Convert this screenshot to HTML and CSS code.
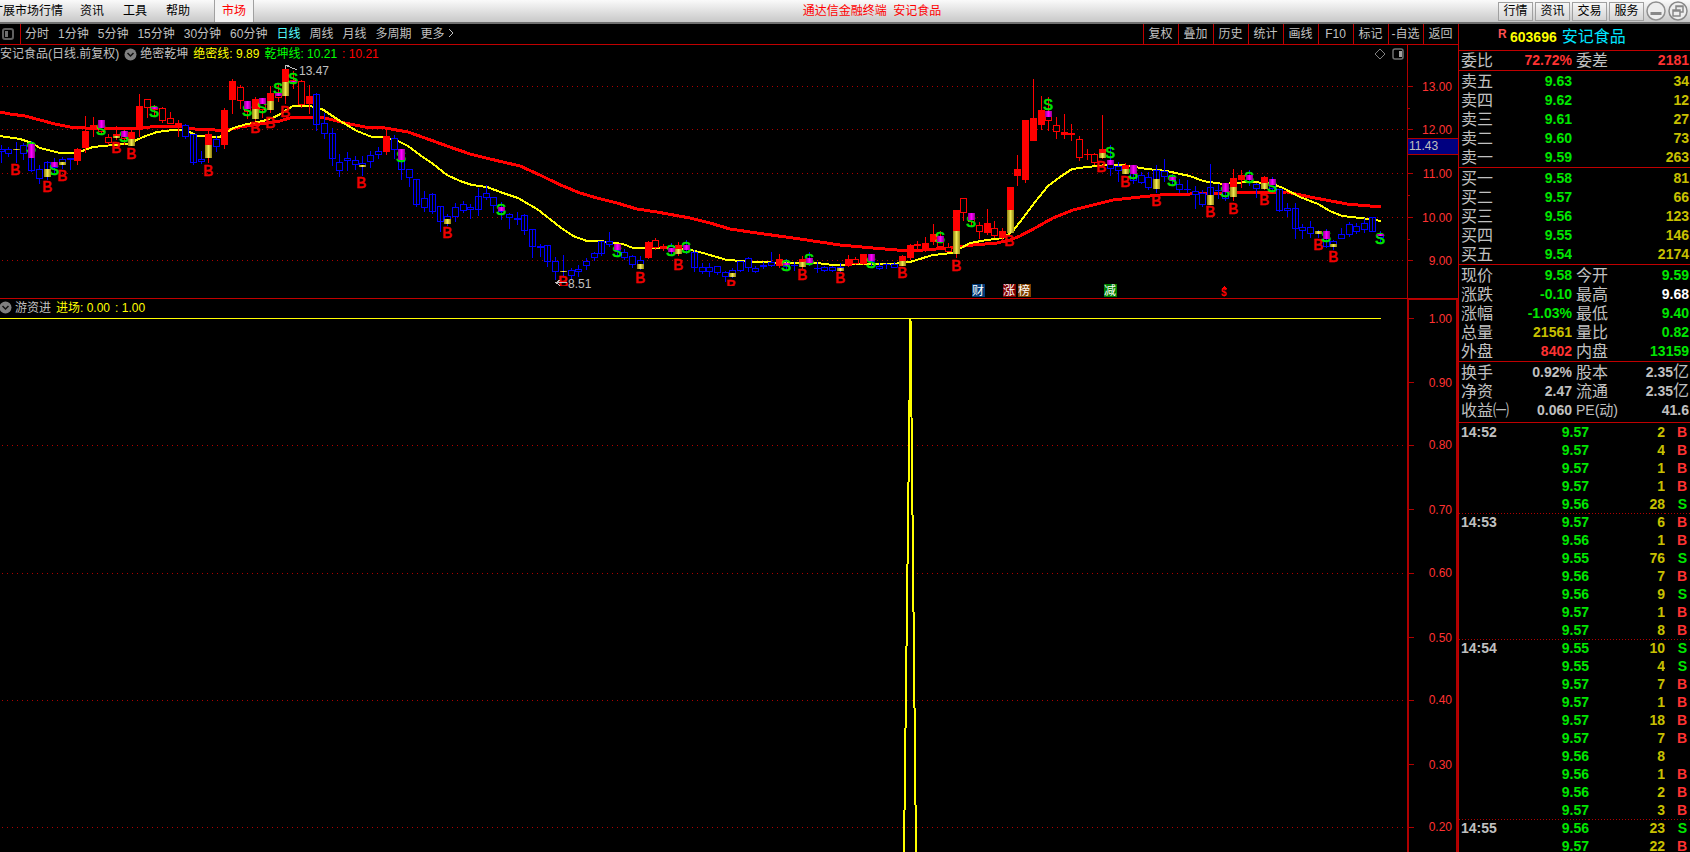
FILE: index.html
```html
<!DOCTYPE html>
<html lang="zh-CN">
<head>
<meta charset="utf-8">
<title>通达信金融终端 安记食品</title>
<link rel="stylesheet" href="styles.css">
</head>
<body>
<header class="titlebar">
  <nav class="menu">
    <button>扩展市场行情</button><button>资讯</button><button>工具</button><button>帮助</button>
  </nav>
  <button class="market-tab">市场</button>
  <h1 class="app-title">通达信金融终端&nbsp; 安记食品</h1>
  <div class="window-tools">
    <button class="tool">行情</button><button class="tool">资讯</button><button class="tool">交易</button><button class="tool">服务</button>
    <button class="round" aria-label="最小化"><svg width="20" height="20" viewBox="0 0 20 20"><circle cx="10" cy="10" r="9" fill="#eee" stroke="#909090" stroke-width="1.5"/><rect x="4.500" y="11" width="11" height="3" fill="#888"/></svg></button>
    <button class="round" aria-label="还原"><svg width="20" height="20" viewBox="0 0 20 20" fill="#eee" stroke="#888" stroke-width="1.5"><circle cx="10" cy="10" r="9"/><path d="M8 5H15V11H8Z M8 5.500H15"/><path d="M5 9H12V15H5Z M5 10H12"/></svg></button>
  </div>
</header>
<main class="workspace">
  <section class="charts">
    <nav class="periods">
      <button class="layout-toggle" aria-label="侧栏"><svg width="12" height="12" viewBox="0 0 12 12"><rect x="1" y="1" width="10" height="10" rx="2" fill="none" stroke="#606060" stroke-width="2"/><rect x="3" y="3" width="3" height="6" fill="#707070"/></svg></button>
      <div class="period-list">
        <button>分时</button><button>1分钟</button><button>5分钟</button><button>15分钟</button><button>30分钟</button><button>60分钟</button><button class="active">日线</button><button>周线</button><button>月线</button><button>多周期</button><button>更多 <svg width="7" height="10" viewBox="0 0 7 10"><path d="M1 1L5 5L1 9" fill="none" stroke="#c0c0c0"/></svg></button>
      </div>
      <div class="chart-tools">
        <button>复权</button><button>叠加</button><button>历史</button><button>统计</button><button>画线</button><button>F10</button><button>标记</button><button>-自选</button><button>返回</button>
      </div>
    </nav>
    <div class="legend">
      <div class="legend-items">
        <span>安记食品(日线.前复权)</span>
        <svg class="drop" width="13" height="13" viewBox="0 0 13 13"><circle cx="6.500" cy="6.500" r="6" fill="#808080"/><path d="M3.500 5L6.500 8L9.500 5" fill="none" stroke="#111" stroke-width="1.500"/></svg>
        <span>绝密乾坤</span><span class="yellow">绝密线: 9.89</span><span class="green">乾坤线: 10.21</span><span class="crimson">: 10.21</span>
      </div>
      <div class="legend-icons">
        <svg width="12" height="12" viewBox="0 0 12 12"><path d="M6 1L11 6L6 11L1 6Z" fill="none" stroke="#808080"/></svg>
        <svg width="12" height="12" viewBox="0 0 12 12"><rect x="1" y="1" width="10" height="10" rx="2" fill="none" stroke="#707070" stroke-width="1.500"/><rect x="7" y="3" width="3" height="6" fill="#a0a0a0"/></svg>
      </div>
      <div class="axis-cap"></div>
    </div>
    <svg class="plot" id="price" viewBox="0 63 1458 235" role="img" aria-label="日线">
      <defs>
        <linearGradient id="gold"><stop offset="0" stop-color="#908010"/><stop offset=".5" stop-color="#f0e850"/><stop offset="1" stop-color="#908010"/></linearGradient>
        <linearGradient id="pink"><stop offset="0" stop-color="#900090"/><stop offset=".5" stop-color="#ff00ff"/><stop offset="1" stop-color="#900090"/></linearGradient>
        <clipPath id="plot-area"><rect x="0" y="63" width="1407" height="223"/></clipPath>
      </defs>
      <g class="grid"><path d="M2 86.500H1404M2 129.500H1404M2 173.500H1404M2 217.500H1404M2 260.500H1404"/></g>
      <polyline class="slow" points="0,112 10,114 25,116 40,120 55,124 70,127 85,128 105,128 130,129 150,127 175,126 195,129 215,130 228,130 240,127 260,124 280,121 290,118 308,117 325,118 345,123 365,127 385,128 408,132 425,138 447,146 470,154 490,159 520,166 540,175 550,180 563,186 580,193 597,198 617,203 637,209 657,212 690,218 710,223 730,229 757,233 800,239 840,245 873,248 897,250 923,250 950,248 973,245 997,243 1010,240 1020,236 1037,227 1053,218 1073,210 1093,205 1113,200 1140,197 1160,195 1190,194 1227,193 1287,192 1310,197 1347,204 1381,207"/>
      <polyline class="fast" points="0,136 20,139 32,143 40,148 60,153 77,153 93,147 113,145 128,144 143,137 157,132 173,130 185,130 198,136 220,137 233,128 247,124 263,121 277,116 293,106 310,106 322,109 340,121 357,131 372,137 383,137 398,141 408,146 420,155 433,164 447,175 460,181 472,185 487,187 503,193 518,198 537,209 560,227 573,236 587,241 600,241 623,244 633,248 653,248 687,249 703,253 727,260 757,262 787,263 817,263 833,265 860,264 893,264 910,262 923,258 933,255 952,253 970,243 987,240 1003,238 1013,231 1023,218 1035,202 1048,186 1060,177 1072,169 1087,167 1107,165 1123,165 1147,169 1167,171 1180,174 1190,176 1203,181 1223,184 1247,182 1270,183 1283,188 1300,197 1318,204 1330,211 1342,216 1360,218 1370,219 1381,221"/>
      <g id="candles"></g>
      <g id="letters" class="letters" clip-path="url(#plot-area)"></g>
      <g id="bars"></g>
      <g class="note">
        <path d="M285 69V65H289M285 65L297 70"/><text x="299" y="75">13.47</text>
        <path d="M567 282.500H556M560 280L556 282.500L560 286"/><text x="568" y="288">8.51</text>
      </g>
      <g class="badges">
        <rect x="972" y="284" width="13" height="13" fill="#003a78"/><text x="972" y="295">财</text>
        <rect x="1003" y="284" width="13" height="13" fill="#800000"/><text x="1003" y="295">涨</text>
        <rect x="1018" y="284" width="13" height="13" fill="#804000"/><text x="1018" y="295">榜</text>
        <rect x="1104" y="284" width="13" height="13" fill="#008000"/><text x="1104" y="295">减</text>
        <path d="M1221 289L1224 286L1227 289Z" fill="#f00"/><text class="dollar" x="1221" y="296">$</text>
      </g>
      <g class="axis">
        <path d="M1407.500 63V298M1407 86.500H1413M1407 129.500H1413M1407 173.500H1413M1407 217.500H1413M1407 260.500H1413M1407 108.500H1410M1407 195.500H1410M1407 239.500H1410"/>
        <text x="1452" y="91">13.00</text><text x="1452" y="134">12.00</text><text x="1452" y="178">11.00</text><text x="1452" y="222">10.00</text><text x="1452" y="265">9.00</text>
        <rect x="1407.500" y="138.500" width="52" height="16"/><text class="current" x="1409" y="150">11.43</text>
      </g>
    </svg>
    <div class="legend signal">
      <div class="legend-items">
        <svg class="drop" width="13" height="13" viewBox="0 0 13 13"><circle cx="6.500" cy="6.500" r="6" fill="#808080"/><path d="M3.500 5L6.500 8L9.500 5" fill="none" stroke="#111" stroke-width="1.500"/></svg>
        <span>游资进</span><span class="yellow">进场: 0.00</span><span class="yellow">: 1.00</span>
      </div>
      <div class="axis-cap"></div>
    </div>
    <svg class="plot" viewBox="0 316 1458 536" role="img" aria-label="游资进">
      <g class="grid"><path d="M2 445.500H1404M2 573.500H1404M2 700.500H1404M2 827.500H1404"/></g>
      <path class="line" d="M0 318.500H1381"/>
      <path class="fast" d="M904 853L910.500 319L916 853"/>
      <path class="axis-line" d="M1408 316V853M1457 316V853"/>
      <g class="axis">
        <path d="M1408 318.500H1414M1408 382.500H1414M1408 445.500H1414M1408 509.500H1414M1408 573.500H1414M1408 637.500H1414M1408 700.500H1414M1408 764.500H1414M1408 827.500H1414"/>
        <text x="1452" y="323">1.00</text><text x="1452" y="387">0.90</text><text x="1452" y="449">0.80</text><text x="1452" y="514">0.70</text><text x="1452" y="577">0.60</text><text x="1452" y="642">0.50</text><text x="1452" y="704">0.40</text><text x="1452" y="769">0.30</text><text x="1452" y="831">0.20</text>
      </g>
    </svg>
  </section>
  <aside class="quote">
    <h2 class="stock"><sup>R</sup><b>603696</b><span>安记食品</span></h2>
    <table class="pairs ratio"><colgroup><col class="c1"><col class="c2"><col class="c3"><col></colgroup>
      <tr><th>委比</th><td class="red">72.72%</td><th>委差</th><td class="red">2181</td></tr>
    </table>
    <table class="levels"><colgroup><col class="c1"><col class="c2"><col></colgroup>
      <tr><th>卖五</th><td>9.63</td><td>34</td></tr>
      <tr><th>卖四</th><td>9.62</td><td>12</td></tr>
      <tr><th>卖三</th><td>9.61</td><td>27</td></tr>
      <tr><th>卖二</th><td>9.60</td><td>73</td></tr>
      <tr><th>卖一</th><td>9.59</td><td>263</td></tr>
    </table>
    <table class="levels"><colgroup><col class="c1"><col class="c2"><col></colgroup>
      <tr><th>买一</th><td>9.58</td><td>81</td></tr>
      <tr><th>买二</th><td>9.57</td><td>66</td></tr>
      <tr><th>买三</th><td>9.56</td><td>123</td></tr>
      <tr><th>买四</th><td>9.55</td><td>146</td></tr>
      <tr><th>买五</th><td>9.54</td><td>2174</td></tr>
    </table>
    <table class="pairs"><colgroup><col class="c1"><col class="c2"><col class="c3"><col></colgroup>
      <tr><th>现价</th><td class="up">9.58</td><th>今开</th><td class="up">9.59</td></tr>
      <tr><th>涨跌</th><td class="up">-0.10</td><th>最高</th><td class="white">9.68</td></tr>
      <tr><th>涨幅</th><td class="up">-1.03%</td><th>最低</th><td class="up">9.40</td></tr>
      <tr><th>总量</th><td class="gold">21561</td><th>量比</th><td class="up">0.82</td></tr>
      <tr><th>外盘</th><td class="red">8402</td><th>内盘</th><td class="up">13159</td></tr>
    </table>
    <table class="pairs finance"><colgroup><col class="c1"><col class="c2"><col class="c3"><col></colgroup>
      <tr><th>换手</th><td>0.92%</td><th>股本</th><td>2.35<span class="unit">亿</span></td></tr>
      <tr><th>净资</th><td>2.47</td><th>流通</th><td>2.35<span class="unit">亿</span></td></tr>
      <tr><th>收益㈠</th><td>0.060</td><th class="small">PE(动)</th><td>41.6</td></tr>
    </table>
    <table class="ticks"><colgroup><col class="t1"><col class="t2"><col class="t3"><col></colgroup><tbody id="ticks"></tbody></table>
  </aside>
</main>
<script src="chart.js"></script>
</body>
</html>
```
FILE: styles.css
```css
* { box-sizing: border-box; }
html, body { height: 100%; }
body {
  margin: 0;
  display: flex;
  flex-direction: column;
  overflow: hidden;
  background: #000;
  color: #c0c0c0;
  font: 12px/18px "Liberation Sans", "Noto Sans CJK SC", sans-serif;
}
button {
  margin: 0;
  padding: 0;
  border: 0;
  background: none;
  color: inherit;
  font: inherit;
  white-space: nowrap;
}
svg { flex: none; }

.titlebar {
  display: flex;
  flex: none;
  height: 24px;
  border-bottom: 2px solid #707070;
  background: linear-gradient(#fafafa, #c8c8c8);
  color: #000;
}
.menu {
  display: flex;
  gap: 19px;
  margin-left: -9px;
  padding-right: 24px;
}
.menu button:first-child { margin-right: -2px; }
.market-tab {
  width: 40px;
  border: solid #a0a0a0;
  border-width: 0 1px;
  background: #f4f4f4;
  color: #f00;
}
.app-title {
  flex: 1;
  margin: 0;
  padding-right: 8px;
  color: #f00;
  font-size: 12px;
  font-weight: 400;
  line-height: 22px;
  text-align: center;
}
.window-tools {
  display: flex;
  align-items: center;
  gap: 2px;
  padding-right: 2px;
}
.tool {
  width: 35px;
  height: 19px;
  border: 1px solid #a0a0a0;
  background: linear-gradient(#f6f6f6, #d4d4d4);
  line-height: 16px;
}
.round { width: 20px; height: 20px; }
.round svg { display: block; }

.workspace {
  display: grid;
  flex: 1;
  grid-template-columns: minmax(0, 1fr) 232px;
  min-height: 0;
}
.charts {
  display: flex;
  flex-direction: column;
  min-height: 0;
  overflow: hidden;
}
.periods {
  display: flex;
  flex: none;
  height: 21px;
  border-bottom: 1px solid #c00000;
}
.layout-toggle {
  display: flex;
  align-items: center;
  width: 21px;
  padding-left: 2px;
  border-right: 1px solid #c00000;
}
.period-list {
  display: flex;
  flex: 1;
  gap: 9px;
  padding-left: 4px;
}
.active { color: #54fcfc; }
.chart-tools { display: flex; }
.chart-tools button {
  width: 35px;
  padding-right: 1px;
  border-left: 1px solid #c00000;
}

.legend {
  display: flex;
  flex: none;
  height: 18px;
}
.legend-items {
  display: flex;
  flex: 1;
  align-items: center;
  gap: 5px;
  white-space: nowrap;
}
.legend-items .drop { margin-right: -2px; }
.legend-icons {
  display: flex;
  align-items: center;
  gap: 6px;
  padding-right: 3px;
}
.axis-cap {
  width: 51px;
  border-left: 1px solid #c00000;
}
.signal {
  border-top: 1px solid #c00000;
}
.signal .drop { margin-left: -1px; }
.signal .axis-cap {
  border: solid #b00000;
  border-width: 1px 2px 0;
}
.yellow { color: #ff0; }
.green { color: #0f0; }
.crimson { color: #f00; }

.plot {
  display: block;
  width: 100%;
  height: auto;
  overflow: visible;
  shape-rendering: crispEdges;
}
.grid path {
  fill: none;
  stroke: #b00000;
  stroke-dasharray: 1 4;
}
.slow { fill: none; stroke: #f00; stroke-width: 3; }
.fast { fill: none; stroke: #ff0; stroke-width: 2; }
.line { stroke: #ff0; }
.axis path { fill: none; stroke: #b00000; }
.axis-line { fill: none; stroke: #b00000; stroke-width: 2; }
.axis rect { fill: #000080; stroke: #b00000; }
.axis text { fill: #ff3232; text-anchor: end; }
.axis .current { fill: #c0c0c0; text-anchor: start; }
.note path { fill: none; stroke: #c0c0c0; }
.note text { fill: #c0c0c0; }
.badges text { fill: #fff; }
.badges .dollar { fill: #f00; font-size: 10px; font-weight: 700; }
.letters text {
  font: 17px "Liberation Mono", monospace;
  text-anchor: middle;
}
.letters .buy { fill: #f00000; stroke: #f00000; }
.letters .sell { fill: #00e600; stroke: #00e600; }
.letters .buy, .letters .sell { stroke-width: 0.5; }

.quote {
  min-height: 0;
  overflow: hidden;
  border-left: 1px solid #c00000;
}
.stock {
  display: flex;
  height: 27px;
  margin: 0;
  padding-left: 39px;
  border-bottom: 1px solid #c00000;
  font-size: 16px;
  font-weight: 400;
  line-height: 26px;
}
.stock sup {
  width: 12px;
  color: #ff5050;
  font-size: 12px;
  font-weight: 700;
  line-height: 20px;
  vertical-align: top;
}
.stock b { color: #ff0; font-size: 14px; }
.stock span { padding-left: 5px; color: #00e6ff; }
table {
  width: 100%;
  border-collapse: separate;
  border-spacing: 0;
  table-layout: fixed;
}
.pairs, .levels { padding-top: 1px; border-bottom: 1px solid #c00000; }
.ratio { padding-top: 0; }
.c1 { width: 50px; }
.c2 { width: 63px; }
.c3 { width: 50px; }
th, td {
  height: 19px;
  padding: 0;
  overflow: hidden;
  line-height: 19px;
  white-space: nowrap;
}
th {
  padding-left: 2px;
  font-size: 16px;
  font-weight: 400;
  text-align: left;
}
td {
  font-size: 14px;
  font-weight: 700;
  text-align: right;
}
td + th { padding-left: 4px; }
td:last-child { padding-right: 1px; }
.small { font-size: 14px; }
.unit { font-size: 16px; font-weight: 400; line-height: 1px; }
.levels td { color: #00e600; }
.levels td + td { color: #c8c000; }
.red { color: #ff3232; }
.up { color: #00e600; }
.white { color: #fff; }
.gold { color: #c8c000; }
.finance { padding-bottom: 2px; }

.t1 { width: 60px; }
.t2 { width: 70px; }
.t3 { width: 76px; }
.ticks th, .ticks td { height: 18px; line-height: 18px; }
.ticks th { font-size: 14px; font-weight: 700; }
.ticks td { color: #00e600; }
.ticks .volume { color: #c8c000; }
.ticks td:last-child { padding-right: 3px; }
.ticks .buy { color: #ff3232; }
.ticks .minute th, .ticks .minute td {
  background: repeating-linear-gradient(90deg, #b00000 0 1px, transparent 1px 3px) top / 100% 1px no-repeat;
}
```
FILE: chart.js
```js
// kind, x, high, body top, body bottom, low
// r: solid red, h: hollow red, b: hollow blue
const candles = `
b 1 145 149 152 163;b 8 147 149 154 157;b 16 142 149 150 163;b 23 143 145 154 160;b 31 141 144 171 172;b 39 165 169 179 184
b 47 161 162 177 180;b 54 158 162 168 173;b 62 157 159 165 169;b 70 158 158 160 170;r 77 148 149 161 165;r 85 116 131 148 153
r 93 117 125 127 137;h 101 120 120 132 134;h 108 134 137 143 145;r 116 126 134 137 140;h 124 129 131 139 145;r 131 127 132 146 146
r 139 94 106 130 137;h 147 99 99 108 118;h 154 105 107 110 117;h 162 107 108 121 123;h 170 112 118 124 124;r 178 120 123 128 137
b 185 124 125 137 139;b 193 134 134 163 165;b 201 151 159 162 164;r 208 130 134 158 163;b 216 136 139 147 152;r 224 108 110 145 149
r 232 79 81 100 114;h 240 85 87 101 109;h 247 101 101 112 119;r 255 97 99 119 121;h 262 98 98 110 118;r 270 86 93 110 113
h 278 83 93 98 102;r 285 68 69 96 104;h 293 71 80 83 89;h 301 80 81 105 108;r 309 85 96 104 114;b 316 93 94 125 131
b 324 113 123 134 139;b 332 128 133 159 166;b 339 154 162 171 177;b 347 152 158 161 171;b 355 156 160 165 170;b 362 156 163 167 176
b 370 151 155 162 168;b 378 147 151 155 159;r 386 130 136 152 155;b 394 135 138 150 159;b 401 149 149 170 180;b 409 169 169 178 187
b 416 179 179 205 207;b 424 191 198 208 212;b 432 193 194 212 214;b 440 206 206 222 232;b 447 214 216 224 226;b 455 203 207 217 222
b 463 201 204 211 213;b 470 204 207 210 219;b 478 188 196 210 216;b 486 185 193 198 200;b 493 197 197 206 213;b 501 202 207 212 220
b 509 213 214 218 229;b 517 212 218 220 225;b 524 214 215 231 235;b 532 229 229 247 258;b 540 244 246 248 257;b 547 245 245 262 267
b 555 257 261 272 280;b 563 255 271 272 276;b 571 268 270 276 280;b 578 265 269 272 277;b 586 258 261 266 270;b 594 252 253 258 261
b 601 241 241 254 256;b 609 232 241 245 247;b 617 244 244 251 256;b 624 249 252 258 260;b 632 255 256 265 268;b 640 256 260 269 270
r 648 241 242 258 259;h 655 238 240 248 250;r 663 244 246 249 251;b 671 243 246 252 255;r 678 242 245 254 256;b 686 240 245 250 254
b 694 250 252 268 272;b 702 263 267 272 274;b 709 263 267 272 277;b 717 266 266 273 275;b 725 271 272 277 282;b 732 268 270 277 278
b 740 261 261 271 272;b 748 257 258 268 272;b 755 266 268 272 273;b 763 262 265 267 269;b 771 252 262 266 267;r 779 254 259 266 268
b 786 259 263 267 271;b 794 262 265 266 271;r 802 256 259 267 269;b 809 252 258 263 266;b 817 262 268 269 273;b 824 266 267 271 272
b 832 266 267 271 272;b 840 263 267 271 273;r 848 255 259 266 267;h 855 257 259 264 265;r 863 254 254 264 265;b 871 254 254 262 266
b 879 263 266 269 270;b 886 263 264 265 269;b 894 262 264 268 268;r 902 255 256 266 266;r 910 244 245 258 260;r 917 241 244 246 249
r 925 237 243 251 252;r 933 224 234 242 245;h 940 231 236 247 247;h 948 243 247 252 252;r 956 210 210 254 258;h 963 198 198 213 221
h 971 213 213 222 226;h 979 222 225 232 239;r 987 209 223 233 235;h 994 221 228 236 238;r 1002 228 231 238 240;r 1010 187 187 233 233
r 1017 155 169 176 186;r 1025 120 120 180 183;r 1033 79 118 141 141;r 1041 96 110 125 130;h 1048 97 111 121 131;h 1056 117 125 132 139
r 1064 114 132 135 139;r 1071 124 133 135 141;h 1079 136 139 158 161;r 1087 149 154 155 160;h 1094 153 154 163 165;r 1102 115 149 158 159
b 1110 145 160 169 176;b 1118 162 166 171 182;r 1125 163 165 174 174;b 1133 165 165 181 184;b 1141 172 175 183 184;b 1148 172 177 188 190
b 1156 165 170 189 193;b 1164 159 171 177 182;b 1172 174 177 181 186;b 1179 179 184 190 193;b 1187 180 189 190 193;b 1195 186 191 195 209
b 1202 190 193 205 207;b 1210 164 187 205 205;b 1218 184 190 191 199;b 1225 183 183 199 201;r 1233 169 178 197 201;r 1241 170 175 180 188
b 1249 170 175 180 186;b 1256 183 184 189 198;r 1264 176 177 189 190;b 1272 177 179 189 191;b 1279 189 189 211 212;b 1287 203 208 211 217
b 1295 203 208 229 239;b 1302 224 227 231 239;b 1310 221 227 234 238;b 1318 230 231 234 238;b 1326 229 231 247 248;b 1333 240 241 247 250
b 1341 228 234 239 239;b 1349 222 224 235 237;b 1356 223 226 232 234;b 1364 218 223 230 233;b 1372 217 217 232 232;b 1380 231 234 238 243`;

const goldBars = `16 149 150;47 169 177;62 162 165;116 136 138;131 139 146;208 145 158;255 109 119;270 101 110;285 82 96;362 165 167;447 219 224;563 271 272
640 264 269;678 249 254;732 273 277;802 262 267;840 268 271;902 261 266;956 231 254;1010 210 233;1102 153 158;1125 169 174;1156 179 189
1210 195 205;1233 187 197;1264 183 189;1318 231 234;1333 244 247`;
const pinkBars = `31 144 158;54 162 167;101 120 128;124 131 137;154 107 109;247 101 109;262 98 104;278 93 96;293 81 82;401 149 160;501 207 211;617 244 250
671 248 252;686 245 250;786 263 265;809 258 263;871 254 261;940 236 242;971 213 220;1048 111 117;1110 160 165;1133 165 174;1172 177 180
1225 183 192;1249 175 180;1272 179 185;1326 231 239;1380 234 236`;

const buys = `15 170;47 187;62 176;116 148;131 154;208 171;255 128;270 123;285 112;361 183;447 233;563 282;640 278;678 265;731 286;802 275;840 278
902 273;956 266;1009 241;1101 167;1125 182;1156 201;1210 212;1233 209;1264 200;1318 245;1333 257`;
const sells = `31 148;54 170;101 130;124 137;154 112;247 111;262 108;278 89;293 79;401 157;501 210;617 252;671 251;686 248;786 266;809 260;871 263
940 238;971 222;1048 105;1110 153;1133 174;1172 181;1225 192;1249 178;1272 187;1326 237;1380 239`;

const rows = text => text.trim().split(/[;\n]/).map(row => row.split(' '));
const rect = (x, y, w, h, fill) => `<rect x="${x}" y="${y}" width="${w}" height="${h}" fill="${fill}"/>`;

document.getElementById('candles').innerHTML = rows(candles).map(([kind, ...values]) => {
  const [x, high, top, bottom, low] = values.map(Number);
  const color = kind === 'b' ? '#0000ff' : '#ff0000';
  const height = Math.max(bottom - top, 1);
  let out = rect(x, high, 1, low - high, color) + rect(x - 3, top, 7, height, color);
  if (kind !== 'r' && height > 2) {
    out += rect(x - 2, top + 1, 5, height - 2, '#000');
    if (kind === 'b' && height > 12) out += rect(x, top, 1, height, color);
  }
  return out;
}).join('');

const bars = (text, fill) => rows(text).map(([x, top, bottom]) => rect(x - 3, top, 7, bottom - top, fill)).join('');
document.getElementById('bars').innerHTML = bars(goldBars, 'url(#gold)') + bars(pinkBars, 'url(#pink)');

const letters = (text, letter, name) => rows(text).map(([x, y]) => `<text class="${name}" x="${x}" y="${+y + 5}">${letter}</text>`).join('');
document.getElementById('letters').innerHTML = letters(buys, 'B', 'buy') + letters(sells, 'S', 'sell');

const ticks = {
  '14:52': '9.57 2 B;9.57 4 B;9.57 1 B;9.57 1 B;9.56 28 S',
  '14:53': '9.57 6 B;9.56 1 B;9.55 76 S;9.56 7 B;9.56 9 S;9.57 1 B;9.57 8 B',
  '14:54': '9.55 10 S;9.55 4 S;9.57 7 B;9.57 1 B;9.57 18 B;9.57 7 B;9.56 8 ;9.56 1 B;9.56 2 B;9.57 3 B',
  '14:55': '9.56 23 S;9.57 22 B'
};
document.getElementById('ticks').innerHTML = Object.entries(ticks).map(([time, list], group) =>
  list.split(';').map((row, index) => {
    const [price, volume, side] = row.split(' ');
    return `<tr class="${group && !index ? 'minute' : ''}"><th>${index ? '' : time}</th><td>${price}</td><td class="volume">${volume}</td><td class="${side === 'B' ? 'buy' : ''}">${side}</td></tr>`;
  }).join('')).join('');
```
